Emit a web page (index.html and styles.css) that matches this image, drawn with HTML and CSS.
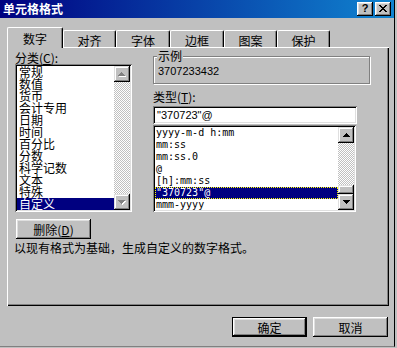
FILE: index.html
```html
<!DOCTYPE html>
<html lang="zh-CN">
<head>
<meta charset="utf-8">
<title>单元格格式</title>
<link rel="stylesheet" href="styles.css">
</head>
<body>
<div class="window">
  <div class="titlebar">
    <span class="title">单元格格式</span>
    <div class="tbtns">
      <span class="tbtn help">?</span>
      <span class="tbtn close"><svg width="8" height="7" viewBox="0 0 8 7"><path d="M0 0h2v1h-2zM6 0h2v1h-2zM1 1h2v1h-2zM5 1h2v1h-2zM2 2h4v1h-4zM3 3h2v1h-2zM2 4h4v1h-4zM1 5h2v1h-2zM5 5h2v1h-2zM0 6h2v1h-2zM6 6h2v1h-2z" fill="#000"/></svg></span>
    </div>
  </div>
  <div class="body">
    <div class="tabs">
      <div class="tab sel">数字</div>
      <div class="tab t2">对齐</div>
      <div class="tab t3">字体</div>
      <div class="tab t4">边框</div>
      <div class="tab t5">图案</div>
      <div class="tab t6">保护</div>
    </div>
    <div class="panel">
      <div class="cols">
        <div class="lcol">
          <div class="lbl">分类(<u>C</u>):</div>
          <div class="listbox cat">
            <ul class="items">
              <li>常规</li>
              <li>数值</li>
              <li>货币</li>
              <li>会计专用</li>
              <li>日期</li>
              <li>时间</li>
              <li>百分比</li>
              <li>分数</li>
              <li>科学记数</li>
              <li>文本</li>
              <li>特殊</li>
              <li class="on">自定义</li>
            </ul>
            <div class="vscroll">
              <div class="sbtn"><svg class="arr dis" width="8" height="5" viewBox="0 0 8 5"><path d="M4 1h1v1h-1zM3 2h3v1h-3zM2 3h5v1h-5zM1 4h7v1h-7z" fill="#fff"/><path d="M3 0h1v1h-1zM2 1h3v1h-3zM1 2h5v1h-5zM0 3h7v1h-7z" fill="#808080"/></svg></div>
              <div class="track"></div>
              <div class="sbtn"><svg class="arr dis" width="8" height="5" viewBox="0 0 8 5"><path d="M1 1h7v1h-7zM2 2h5v1h-5zM3 3h3v1h-3zM4 4h1v1h-1z" fill="#fff"/><path d="M0 0h7v1h-7zM1 1h5v1h-5zM2 2h3v1h-3zM3 3h1v1h-1z" fill="#808080"/></svg></div>
            </div>
          </div>
          <div class="btn del">删除(<u>D</u>)</div>
        </div>
        <div class="rcol">
          <div class="group">
            <span class="glabel">示例</span>
            <div class="sample">3707233432</div>
          </div>
          <div class="lbl tlbl">类型(<u>T</u>):</div>
          <div class="input">"370723"@</div>
          <div class="listbox fmt">
            <ul class="items mono">
              <li>yyyy-m-d h:mm</li>
              <li>mm:ss</li>
              <li>mm:ss.0</li>
              <li>@</li>
              <li>[h]:mm:ss</li>
              <li class="on focus">"370723"@</li>
              <li>mmm-yyyy</li>
            </ul>
            <div class="vscroll">
              <div class="sbtn"><svg class="arr" width="7" height="4" viewBox="0 0 7 4"><path d="M3 0h1v1h-1zM2 1h3v1h-3zM1 2h5v1h-5zM0 3h7v1h-7z" fill="#000"/></svg></div>
              <div class="track"></div>
              <div class="thumb"></div>
              <div class="sbtn"><svg class="arr" width="7" height="4" viewBox="0 0 7 4"><path d="M0 0h7v1h-7zM1 1h5v1h-5zM2 2h3v1h-3zM3 3h1v1h-1z" fill="#000"/></svg></div>
            </div>
          </div>
        </div>
      </div>
      <p class="desc">以现有格式为基础，生成自定义的数字格式。</p>
    </div>
    <div class="footer">
      <div class="btn def">确定</div>
      <div class="btn">取消</div>
    </div>
  </div>
</div>
</body>
</html>
```
FILE: styles.css
```css
* { box-sizing: border-box; }
html, body {
  margin: 0;
  padding: 0;
  background: #c0c0c0;
}
body {
  font-family: "Noto Sans CJK SC", "Noto Sans", sans-serif;
  font-size: 12px;
  color: #000;
  width: 397px;
  height: 348px;
  overflow: hidden;
}
u { text-decoration: underline; text-underline-offset: 1px; }

.window {
  width: 395px;
  height: 347px;
  border-right: 1px solid #000;
  border-bottom: 1px solid #808080;
  background: #c0c0c0;
}

.titlebar {
  height: 18px;
  display: flex;
  align-items: center;
  justify-content: space-between;
  padding: 0 3px 0 3px;
  background: linear-gradient(to right, #000080, #1084d0);
}
.title {
  color: #fff;
  font-weight: bold;
  font-size: 12px;
  line-height: 14px;
}
.tbtns {
  display: flex;
  gap: 2px;
}
.tbtn {
  width: 16px;
  height: 14px;
  display: flex;
  align-items: center;
  justify-content: center;
  background: #c0c0c0;
  box-shadow: inset -1px -1px #000, inset 1px 1px #fff, inset -2px -2px #808080, inset 2px 2px #dfdfdf;
}
.help {
  font-family: "Liberation Sans", sans-serif;
  font-weight: bold;
  font-size: 11px;
  line-height: 11px;
  padding-bottom: 1px;
}
.close svg { display: block; margin-top: -1px; }

.body {
  padding: 9px 0 0 7px;
}

.tabs {
  display: flex;
  align-items: flex-end;
  height: 20px;
}
.tab {
  position: relative;
  height: 17px;
  width: 53px;
  display: flex;
  justify-content: center;
  padding-top: 3px;
  line-height: 13px;
  background: #c0c0c0;
  border-left: 1px solid #fff;
  border-top: 1px solid #fff;
  border-right: 1px solid #000;
  border-radius: 2px 2px 0 0;
  box-shadow: inset -1px 0 #808080;
}
.tab.sel {
  z-index: 1;
  width: 56px;
  height: 21px;
  margin-bottom: -1px;
  padding-top: 4px;
}
.tab.t3, .tab.t4 { width: 54px; }

.panel {
  width: 382px;
  height: 259px;
  padding: 4px 0 0 8px;
  box-shadow: inset 1px 1px #fff, inset -1px -1px #000, inset -2px -2px #808080;
}

.cols {
  display: flex;
  gap: 21px;
}
.lcol { width: 117px; }
.rcol { width: 217px; }

.lbl {
  height: 13px;
  line-height: 13px;
  white-space: nowrap;
}

.listbox {
  display: flex;
  padding: 2px;
  background: #fff;
  box-shadow: inset 1px 1px #808080, inset -1px -1px #fff, inset 2px 2px #000, inset -2px -2px #dfdfdf;
}
.listbox.cat {
  width: 117px;
  height: 148px;
}
.items {
  list-style: none;
  margin: 0;
  padding: 0;
  flex: 1;
  overflow: hidden;
}
.items li {
  height: 12px;
  line-height: 12px;
  padding-left: 2px;
  white-space: nowrap;
}
.items li.on {
  background: #000080;
  color: #fff;
}
.items.mono li {
  font-family: "DejaVu Sans Mono", "Liberation Mono", monospace;
  font-size: 10px;
  padding-left: 1px;
}
.items li.focus {
  outline: 1px dotted #ffff00;
  outline-offset: -1px;
}

.vscroll {
  width: 16px;
  display: flex;
  flex-direction: column;
}
.sbtn, .thumb {
  background: #c0c0c0;
  box-shadow: inset -1px -1px #000, inset 1px 1px #dfdfdf, inset -2px -2px #808080, inset 2px 2px #fff;
}
.sbtn {
  height: 16px;
  display: flex;
  align-items: center;
  justify-content: center;
}
.arr { display: block; }
.track {
  flex: 1;
  background-color: #fff;
  background-image: conic-gradient(#fff 25%, #c0c0c0 0 50%, #fff 0 75%, #c0c0c0 0);
  background-size: 2px 2px;
}
.thumb { height: 9px; }

.btn {
  width: 75px;
  height: 20px;
  display: flex;
  align-items: center;
  justify-content: center;
  line-height: 13px;
  background: #c0c0c0;
  box-shadow: inset -1px -1px #000, inset 1px 1px #fff, inset -2px -2px #808080, inset 2px 2px #dfdfdf;
}
.btn.del {
  margin-top: 7px;
  margin-left: 1px;
  padding-top: 1px;
}
.btn.def {
  border: 1px solid #000;
  box-shadow: inset -1px -1px #000, inset 1px 1px #fff, inset -2px -2px #808080, inset 2px 2px #dfdfdf;
}

.group {
  position: relative;
  margin-top: 5px;
  width: 217px;
  height: 28px;
  border: 1px solid #808080;
  box-shadow: 1px 1px 0 #fff, inset 1px 1px 0 #fff;
  padding: 8px 0 0 4px;
}
.glabel {
  position: absolute;
  top: -7px;
  left: 3px;
  padding: 0 1px;
  line-height: 12px;
  background: #c0c0c0;
}
.sample {
  font-family: "Liberation Sans", Arial, sans-serif;
  font-size: 11px;
  line-height: 13px;
}

.tlbl { margin-top: 6px; }

.input {
  margin-top: 3px;
  width: 204px;
  height: 18px;
  padding: 2px 0 0 4px;
  background: #fff;
  font-family: "Liberation Sans", Arial, sans-serif;
  font-size: 11px;
  line-height: 14px;
  box-shadow: inset 1px 1px #808080, inset -1px -1px #fff, inset 2px 2px #000, inset -2px -2px #dfdfdf;
}

.listbox.fmt {
  margin-top: 1px;
  width: 203px;
  height: 87px;
}

.desc {
  margin: 2px 0 0 -1px;
  line-height: 13px;
  white-space: nowrap;
}

.footer {
  width: 382px;
  display: flex;
  justify-content: flex-end;
  gap: 6px;
  margin-top: 11px;
  padding-right: 1px;
}
```
